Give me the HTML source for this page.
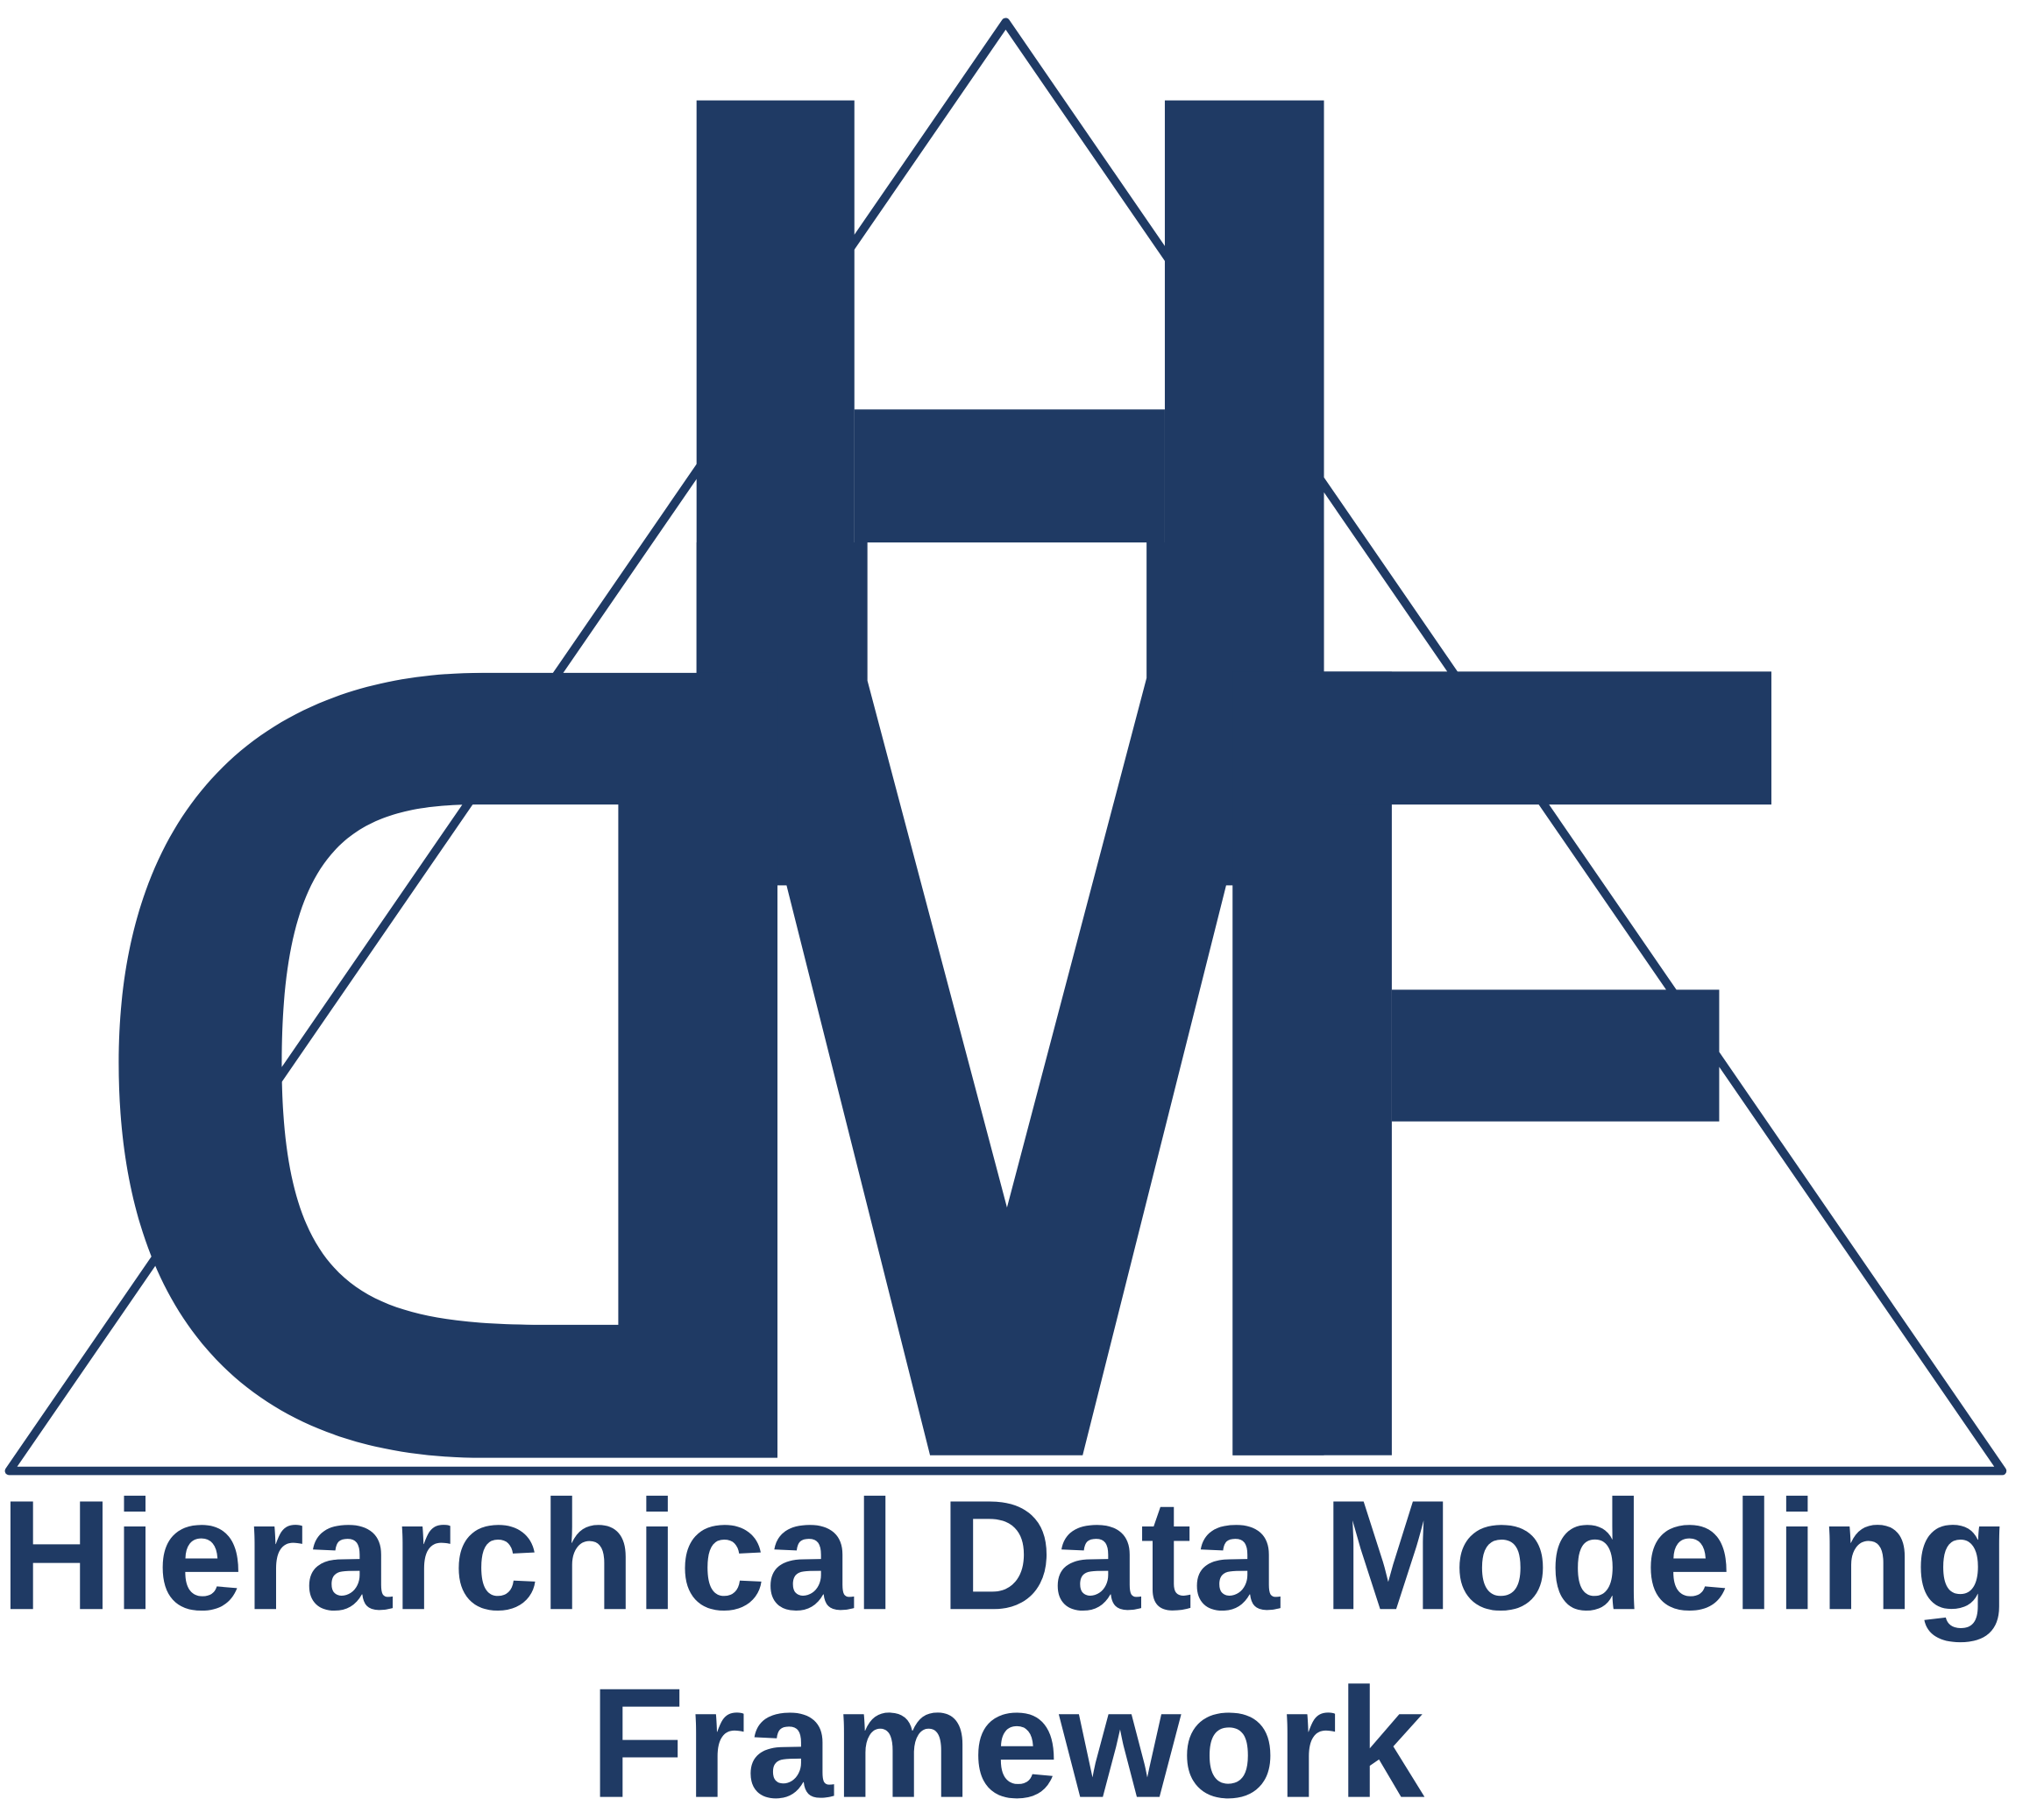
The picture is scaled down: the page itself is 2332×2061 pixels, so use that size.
<!DOCTYPE html>
<html><head><meta charset="utf-8"><style>
html,body{margin:0;padding:0;background:#fff;}
svg{display:block;}
</style></head><body>
<svg width="2332" height="2061" viewBox="0 0 1567 1385" preserveAspectRatio="none" xmlns="http://www.w3.org/2000/svg">
<rect width="1567" height="1385" fill="#fff"/>
<polygon points="771,17 7,1128 1535,1128" fill="none" stroke="#1f3a64" stroke-width="6.5" stroke-linejoin="round"/>
<g fill="#1f3a64">
<rect x="534" y="77" width="121" height="445"/>
<rect x="893" y="77" width="122" height="445"/>
<rect x="655" y="314" width="238" height="102"/>
<polygon points="534,416 665,416 665,522 772,926 879,520 879,416 1015,416 1015,1116 945,1116 945,679 940,679 830,1116 713,1116 603,679 596,679 596,1117 534,1117"/>
<path fill-rule="evenodd" d="M596,516 L370,516 C200,516 91,620 91,815 C91,1010 190,1118 370,1118 L596,1118 Z M474,617 L365,617 C270,617 216,650 216,815 C216,990 280,1016 420,1016 L474,1016 Z"/>
<rect x="945" y="515" width="122" height="601"/>
<rect x="1015" y="515" width="343" height="102"/>
<rect x="1067" y="759" width="251" height="101"/>
</g>
<g fill="#1f3a64" font-family="Liberation Sans, Arial, sans-serif" font-weight="bold" font-size="120">
<text x="0" y="1234" textLength="1541" lengthAdjust="spacingAndGlyphs">Hierarchical Data Modeling</text>
<text x="452" y="1378" textLength="640" lengthAdjust="spacingAndGlyphs">Framework</text>
</g>
</svg>
</body></html>
